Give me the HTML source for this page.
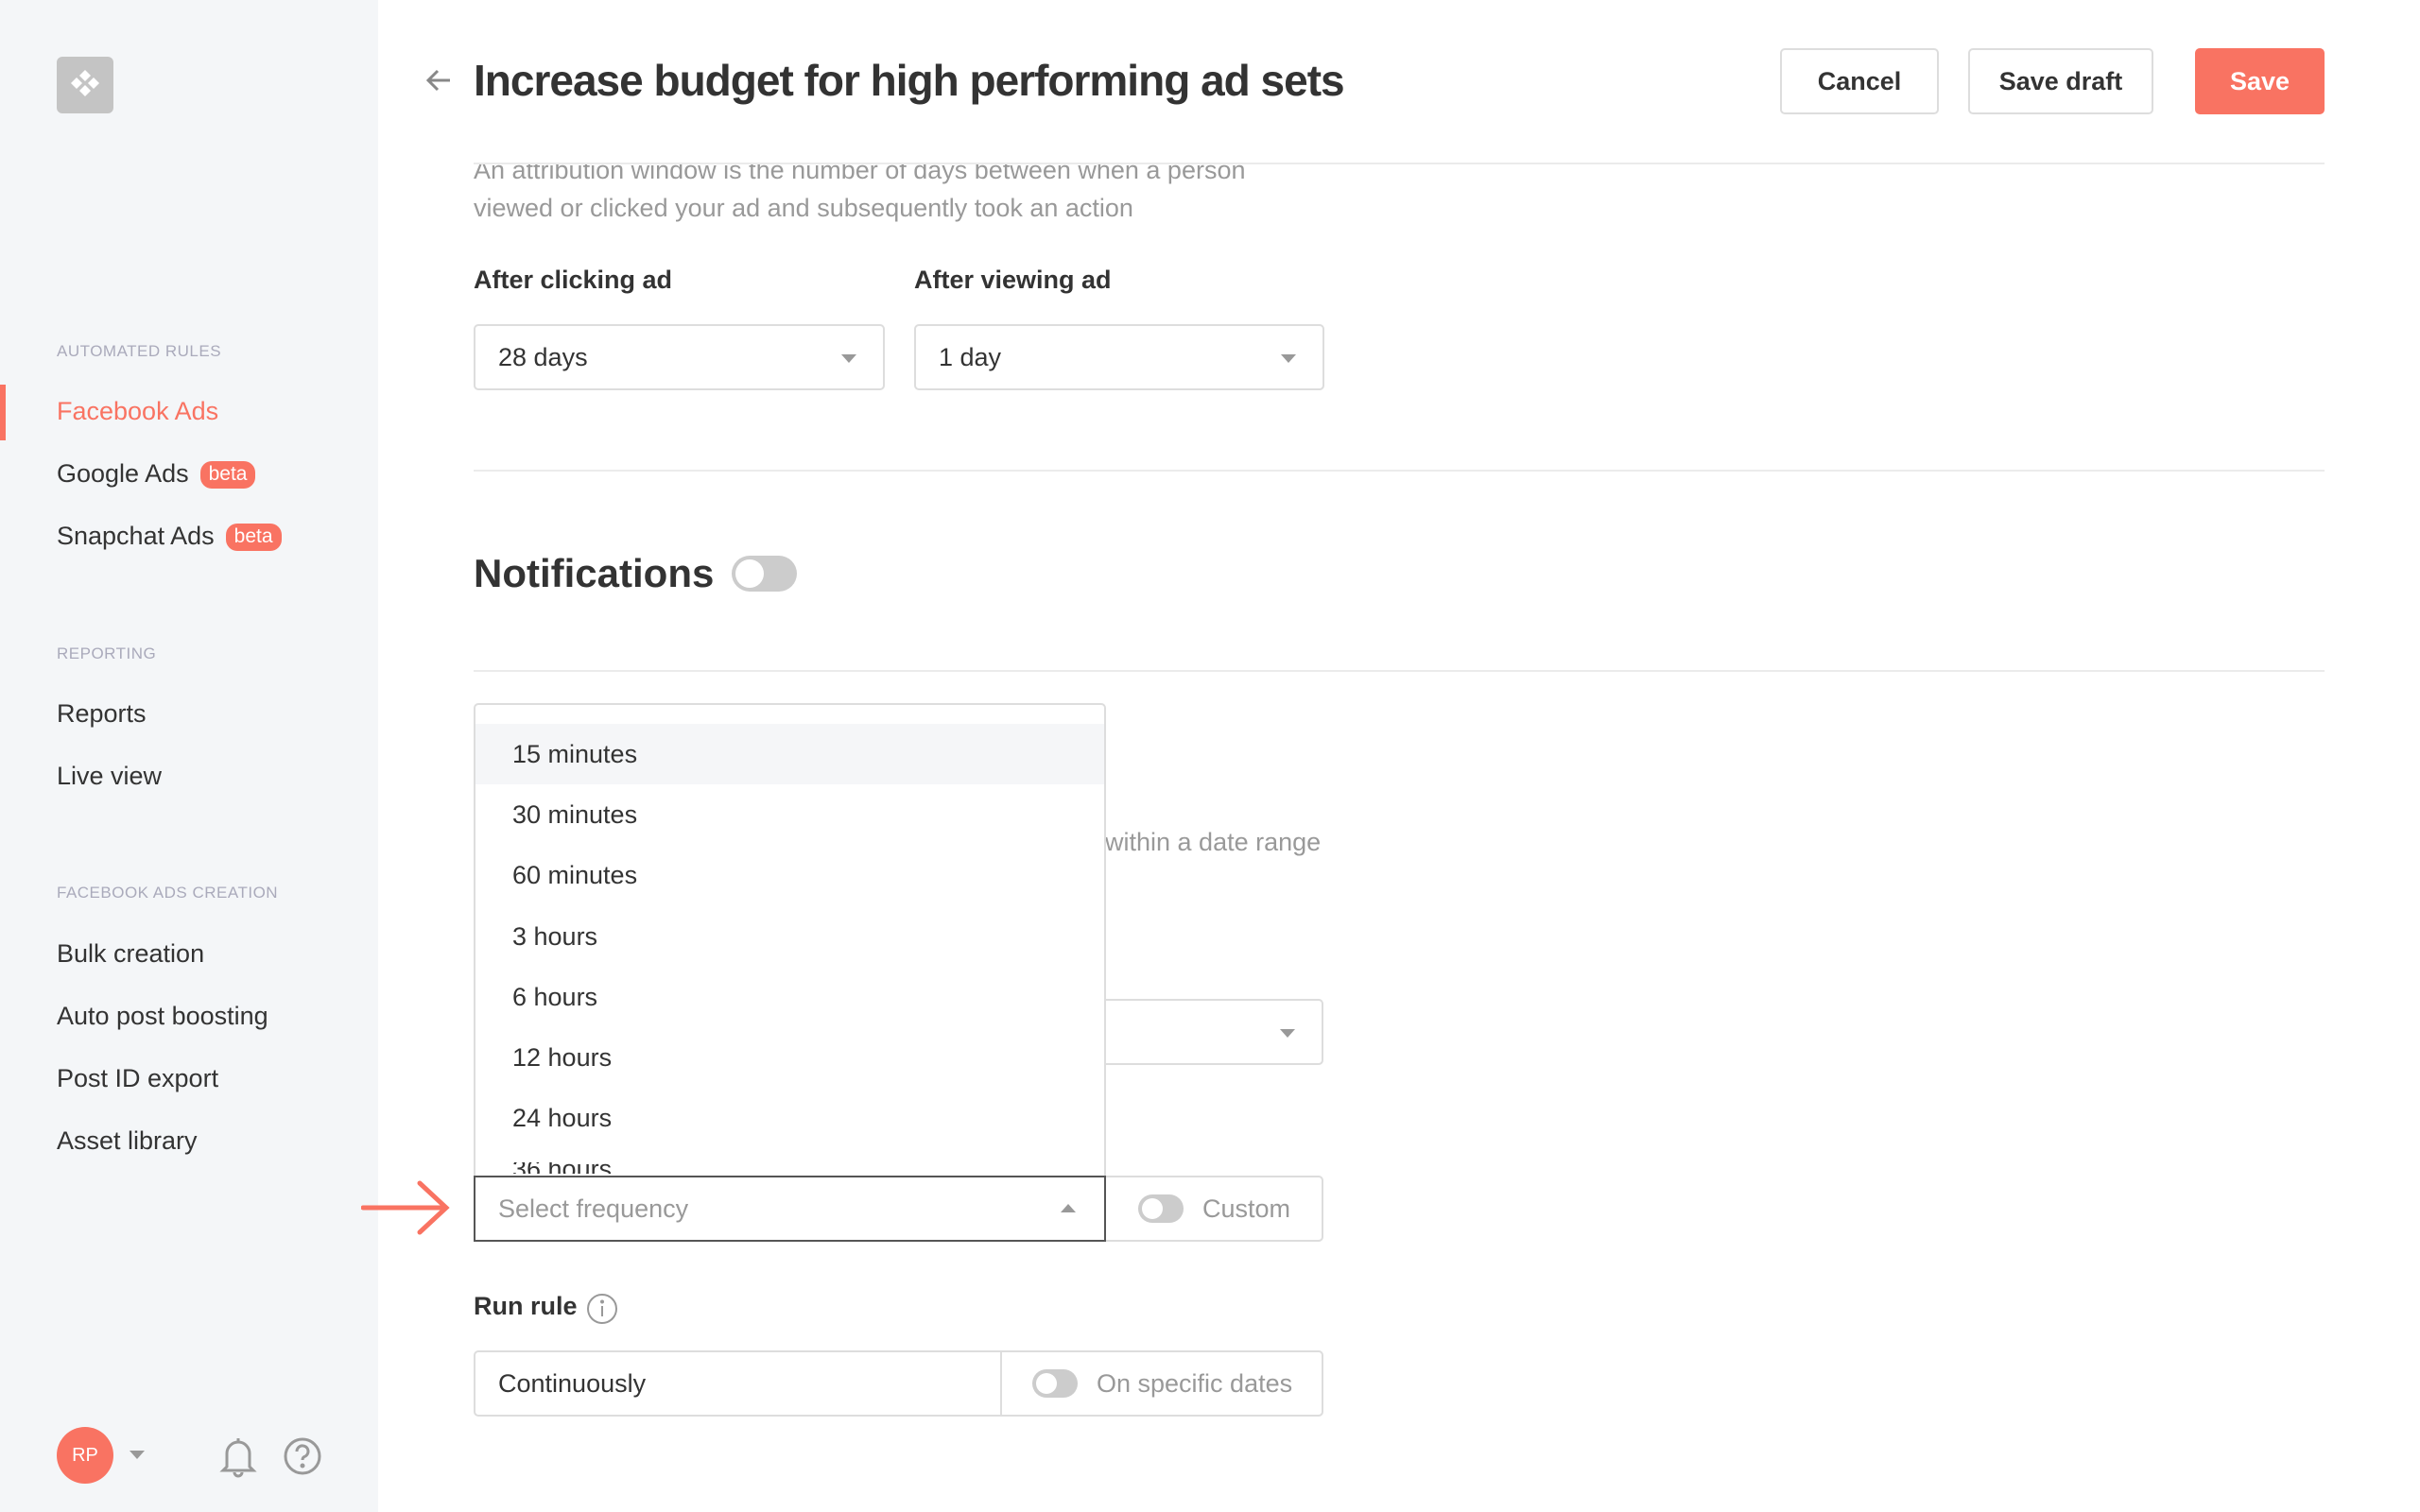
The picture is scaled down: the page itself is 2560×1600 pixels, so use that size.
<!DOCTYPE html>
<html><head><meta charset="utf-8"><style>
*{margin:0;padding:0;box-sizing:border-box}
body{width:2560px;height:1600px;position:relative;overflow:hidden;background:#fff;font-family:"Liberation Sans",sans-serif;color:#333}
.a{position:absolute;white-space:nowrap}
.side{position:absolute;left:0;top:0;width:400px;height:1600px;background:#f4f6f8}
.lab{font-size:17px;color:#aab;letter-spacing:.5px}
.it{font-size:27px;color:#333}
.beta{display:inline-block;background:#f97362;color:#fff;font-size:21px;padding:1px 9px 3px;border-radius:12px;vertical-align:middle;margin-left:12px;line-height:25px}
.btn{position:absolute;top:51px;height:70px;border:2px solid #ddd;border-radius:5px;font-size:27px;font-weight:bold;display:flex;align-items:center;justify-content:center;color:#333}
.box{position:absolute;border:2px solid #ddd;border-radius:5px;background:#fff}
.t27{font-size:27px}
.caret{position:absolute;width:0;height:0;border-left:8px solid transparent;border-right:8px solid transparent;border-top:9px solid #999}
.line{position:absolute;height:2px;background:#ebebeb}
.tog{position:absolute;background:#ccc;border-radius:20px}
.tog::after{content:"";position:absolute;left:4px;top:4px;bottom:4px;aspect-ratio:1;border-radius:50%;background:#fff}
.opt{position:absolute;left:542px;font-size:27px;color:#333}
</style></head><body>
<div class="side"></div>
<div class="a" style="left:60px;top:60px;width:60px;height:60px;background:#c4c4c4;border-radius:6px"></div>
<svg class="a" style="left:70px;top:68px" width="40" height="44" viewBox="0 0 40 44"><g fill="#fff"><path d="M20 6l6 6-6 6-6-6z"/><path d="M11 14l6 6-6 6-6-6z"/><path d="M29 14l6 6-6 6-6-6z"/><path d="M20 22l6 6-6 6-6-6z"/></g></svg>
<div class="a lab" style="left:60px;top:362px">AUTOMATED RULES</div>
<div class="a" style="left:0;top:407px;width:6px;height:59px;background:#f97362"></div>
<div class="a it" style="left:60px;top:420px;color:#f97362">Facebook Ads</div>
<div class="a it" style="left:60px;top:486px">Google Ads<span class="beta">beta</span></div>
<div class="a it" style="left:60px;top:552px">Snapchat Ads<span class="beta">beta</span></div>
<div class="a lab" style="left:60px;top:682px">REPORTING</div>
<div class="a it" style="left:60px;top:740px">Reports</div>
<div class="a it" style="left:60px;top:806px">Live view</div>
<div class="a lab" style="left:60px;top:935px">FACEBOOK ADS CREATION</div>
<div class="a it" style="left:60px;top:994px">Bulk creation</div>
<div class="a it" style="left:60px;top:1060px">Auto post boosting</div>
<div class="a it" style="left:60px;top:1126px">Post ID export</div>
<div class="a it" style="left:60px;top:1192px">Asset library</div>
<div class="a" style="left:60px;top:1510px;width:60px;height:60px;border-radius:50%;background:#f97362;color:#fff;font-size:20px;display:flex;align-items:center;justify-content:center">RP</div>
<div class="caret" style="left:137px;top:1535px"></div>
<svg class="a" style="left:232px;top:1518px" width="40" height="46" viewBox="0 0 40 46" fill="none" stroke="#999" stroke-width="3"><path d="M8 34V20a12 12 0 0 1 24 0v14l4 4H4z"/><path d="M16 40a4 4 0 0 0 8 0"/><path d="M20 4v4"/></svg>
<svg class="a" style="left:299px;top:1520px" width="42" height="42" viewBox="0 0 42 42" fill="none" stroke="#999" stroke-width="3"><circle cx="21" cy="21" r="18"/><path d="M15 16a6 6 0 1 1 8 5.5c-1.5.7-2 1.5-2 3.5"/><circle cx="21" cy="31" r="1" fill="#999"/></svg>

<div class="a" style="left:501px;top:160px;font-size:27px;color:#999;line-height:40px">An attribution window is the number of days between when a person<br>viewed or clicked your ad and subsequently took an action</div>
<div class="a" style="left:501px;top:281px;font-size:27px;font-weight:bold">After clicking ad</div>
<div class="a" style="left:967px;top:281px;font-size:27px;font-weight:bold">After viewing ad</div>
<div class="box" style="left:501px;top:343px;width:435px;height:70px"><div class="a t27" style="left:24px;top:18px">28 days</div><div class="caret" style="right:28px;top:30px"></div></div>
<div class="box" style="left:967px;top:343px;width:434px;height:70px"><div class="a t27" style="left:24px;top:18px">1 day</div><div class="caret" style="right:28px;top:30px"></div></div>
<div class="line" style="left:501px;top:497px;width:1958px"></div>
<div class="a" style="left:501px;top:583px;font-size:42px;font-weight:bold">Notifications</div>
<div class="tog" style="left:774px;top:588px;width:69px;height:38px"></div>
<div class="line" style="left:501px;top:709px;width:1958px"></div>
<div class="a" style="left:1169px;top:876px;font-size:27px;color:#999">within a date range</div>
<div class="box" style="left:1150px;top:1057px;width:250px;height:70px"><div class="caret" style="right:28px;top:30px"></div></div>
<div class="box" style="left:1150px;top:1244px;width:250px;height:70px"><div class="tog" style="left:52px;top:18px;width:48px;height:30px"></div><div class="a t27" style="left:120px;top:18px;color:#999">Custom</div></div>
<div class="a" style="left:501px;top:1244px;width:669px;height:70px;border:2px solid #555;background:#fff"><div class="a t27" style="left:24px;top:18px;color:#999">Select frequency</div><div class="a" style="right:30px;top:28px;width:0;height:0;border-left:8px solid transparent;border-right:8px solid transparent;border-bottom:9px solid #999"></div></div>
<svg class="a" style="left:382px;top:1248px" width="96" height="60" viewBox="0 0 96 60" fill="none" stroke="#f97362" stroke-width="5" stroke-linecap="round"><path d="M2 30h88M62 4l28 26-28 26"/></svg>
<div class="a" style="left:501px;top:744px;width:669px;height:500px;border:2px solid #ddd;border-bottom:none;border-radius:5px 5px 0 0;background:#fff;overflow:hidden">
<div class="a" style="left:0;top:20px;width:669px;height:64px;background:#f5f6f8"></div>
</div>
<div class="opt" style="top:783px">15 minutes</div>
<div class="opt" style="top:847px">30 minutes</div>
<div class="opt" style="top:911px">60 minutes</div>
<div class="opt" style="top:976px">3 hours</div>
<div class="opt" style="top:1040px">6 hours</div>
<div class="opt" style="top:1104px">12 hours</div>
<div class="opt" style="top:1168px">24 hours</div>
<div class="a" style="left:542px;top:1230px;height:12px;overflow:hidden;font-size:27px;line-height:14px">36 hours</div>
<div class="a" style="left:501px;top:1367px;font-size:27px;font-weight:bold">Run rule</div>
<svg class="a" style="left:620px;top:1368px" width="34" height="34" viewBox="0 0 34 34" fill="none" stroke="#999" stroke-width="2"><circle cx="17" cy="17" r="15"/><path d="M17 14v11"/><circle cx="17" cy="9.5" r="1" fill="#999"/></svg>
<div class="box" style="left:501px;top:1429px;width:899px;height:70px"><div class="a t27" style="left:24px;top:18px">Continuously</div><div class="a" style="left:555px;top:0;width:2px;height:66px;background:#ddd"></div><div class="tog" style="left:589px;top:18px;width:48px;height:30px"></div><div class="a t27" style="left:657px;top:18px;color:#999">On specific dates</div></div>

<div class="a" style="left:400px;top:0;width:2160px;height:172px;background:#fff"></div>
<div class="line" style="left:501px;top:172px;width:1958px"></div>
<svg class="a" style="left:450px;top:72px" width="28" height="26" viewBox="0 0 28 26" fill="none" stroke="#888" stroke-width="3"><path d="M26 13H4M13 3L3 13l10 10"/></svg>
<div class="a" style="left:501px;top:58px;font-size:46px;font-weight:bold;color:#333;letter-spacing:-1px">Increase budget for high performing ad sets</div>
<div class="btn" style="left:1883px;width:168px">Cancel</div>
<div class="btn" style="left:2082px;width:196px">Save draft</div>
<div class="btn" style="left:2322px;width:137px;background:#f97362;border-color:#f97362;color:#fff">Save</div>
</body></html>
